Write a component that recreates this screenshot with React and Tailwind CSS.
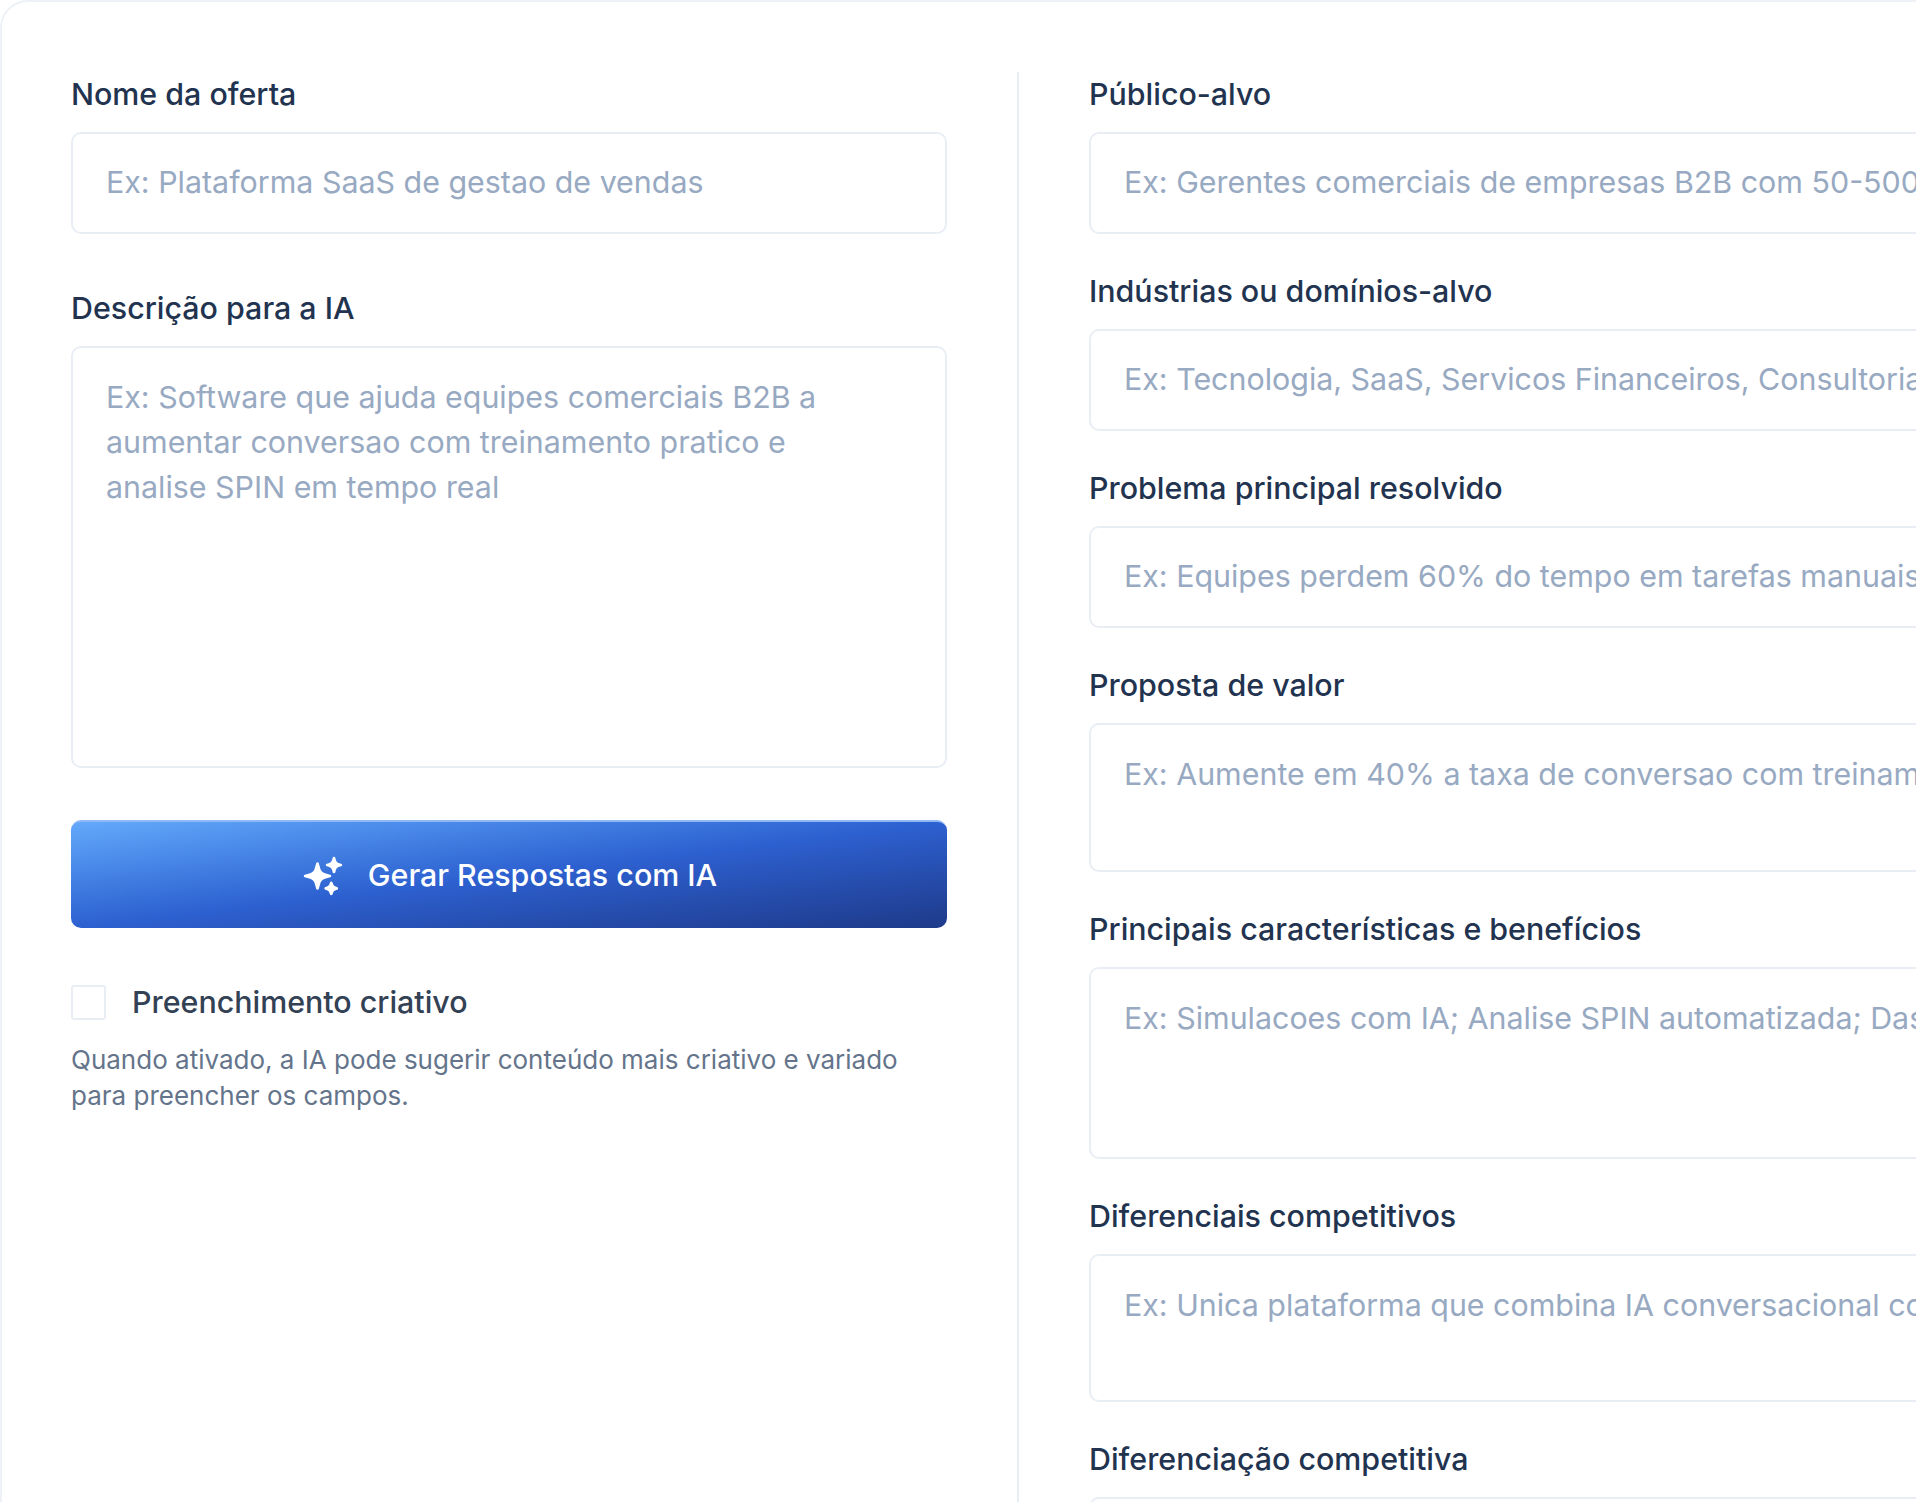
import { HiSparkles } from 'react-icons/hi2';

const rightFields = [
  { label: 'Público-alvo', placeholder: 'Ex: Gerentes comerciais de empresas B2B com 50-500 funcionarios', height: 'h-[102px]' },
  { label: 'Indústrias ou domínios-alvo', placeholder: 'Ex: Tecnologia, SaaS, Servicos Financeiros, Consultoria', height: 'h-[102px]' },
  { label: 'Problema principal resolvido', placeholder: 'Ex: Equipes perdem 60% do tempo em tarefas manuais', height: 'h-[102px]' },
  { label: 'Proposta de valor', placeholder: 'Ex: Aumente em 40% a taxa de conversao com treinamento', height: 'h-[149px]', area: true },
  { label: 'Principais características e benefícios', placeholder: 'Ex: Simulacoes com IA; Analise SPIN automatizada; Dashboard', height: 'h-[192px]', area: true },
  { label: 'Diferenciais competitivos', placeholder: 'Ex: Unica plataforma que combina IA conversacional com', height: 'h-[148px]', area: true },
  { label: 'Diferenciação competitiva', placeholder: '', height: 'h-[148px]', area: true },
];

const labelClass = 'block h-9 mb-[20px] text-[30.4px] leading-9 font-medium text-[#223350]';
const controlClass =
  'block w-full bg-white border-2 border-[#e9eef5] rounded-[10px] px-[33px] text-[30.4px] text-[#1e293b] placeholder:text-[#98a9c2] outline-none';

function Field({ label, placeholder, height, area }) {
  return (
    <div>
      <label className={labelClass}>{label}</label>
      {area ? (
        <textarea
          readOnly
          placeholder={placeholder}
          className={`${controlClass} ${height} py-[27px] leading-[45px] resize-none`}
        />
      ) : (
        <input readOnly placeholder={placeholder} className={`${controlClass} ${height} pb-[3px]`} />
      )}
    </div>
  );
}

export default function App() {
  return (
    <div className="w-[1916px] h-[1502px] overflow-hidden bg-white font-['Inter',sans-serif]">
      <div className="w-[2500px] h-[1700px] flex gap-[70px] pl-[69px] pt-[70px] bg-white border-2 border-[#eef2f7] rounded-[28px]">
        <div className="w-[876px] shrink-0 pt-[4px]">
          <Field label="Nome da oferta" placeholder="Ex: Plataforma SaaS de gestao de vendas" height="h-[102px]" />

          <div className="mt-[56px]">
            <Field
              label="Descrição para a IA"
              placeholder={'Ex: Software que ajuda equipes comerciais B2B a\naumentar conversao com treinamento pratico e\nanalise SPIN em tempo real'}
              height="h-[422px]"
              area
            />
          </div>

          <button className="mt-[52px] w-full h-[108px] flex items-center justify-center gap-[23px] pt-[2px] rounded-[10px] border-t-2 border-[#8fb8f5] bg-gradient-to-br from-[#63a9fb] via-[#2d60d0] to-[#1e3a8a] text-[30.4px] font-medium text-white">
            <HiSparkles className="w-[44px] h-[44px]" />
            Gerar Respostas com IA
          </button>

          <div className="mt-[56px] flex items-center gap-[26px]">
            <div className="w-[35px] h-[35px] border-2 border-[#e9eef5] rounded-[3px] bg-white" />
            <span className="text-[30.4px] leading-9 font-medium text-[#334155]">Preenchimento criativo</span>
          </div>
          <p className="mt-[22px] text-[26px] leading-[36px] text-[#64748b]">
            Quando ativado, a IA pode sugerir conteúdo mais criativo e variado para preencher os campos.
          </p>
        </div>

        <div className="border-l-2 border-[#e9eef5] pl-[70px] w-[1300px] shrink-0 flex flex-col gap-[39px] pt-[4px]">
          {rightFields.map((f) => (
            <Field key={f.label} {...f} />
          ))}
        </div>
      </div>
    </div>
  );
}
